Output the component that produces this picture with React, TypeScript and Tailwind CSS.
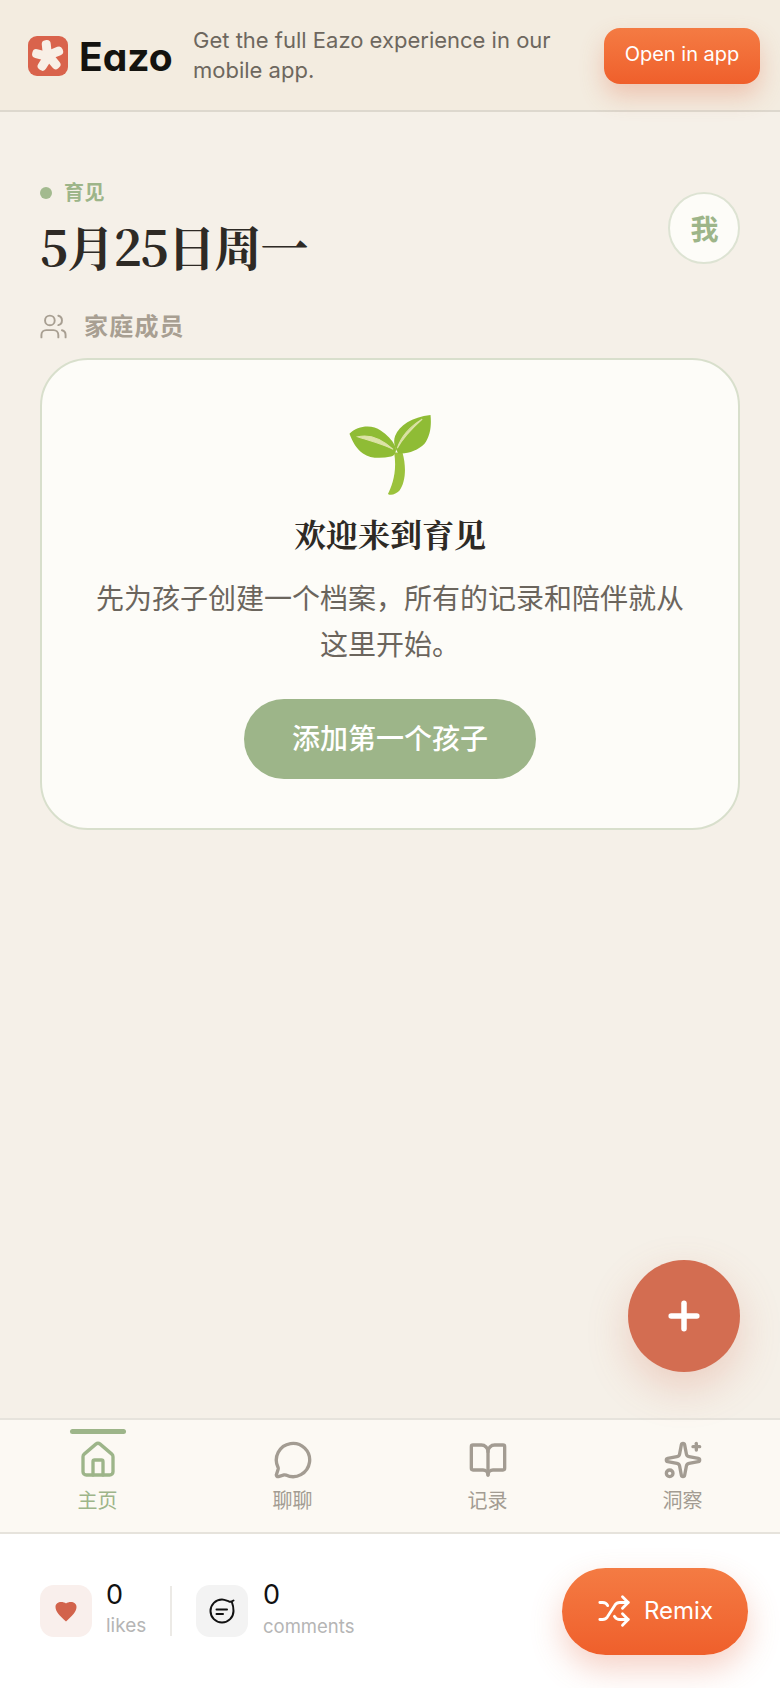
import React from "react";
import { BookOpen, Home, MessageCircle, Plus, Shuffle, Sparkles, Users } from "lucide-react";

const SANS = { fontFamily: '"Inter", "Noto Sans CJK SC", sans-serif' };
const SERIF = { fontFamily: '"Noto Serif CJK SC", "Liberation Serif", "Noto Sans CJK SC", serif' };

function EazoMark() {
  return (
    <svg width="40" height="40" viewBox="0 0 40 40" className="mt-[2px]">
      <rect width="40" height="40" rx="9" fill="#d9634c" />
      <g fill="#f8efe6">
        <rect x="15" y="4" width="9" height="15" rx="4" transform="rotate(-6 20 20)" />
        <rect x="15" y="4" width="9" height="15" rx="4" transform="rotate(68 20 20)" />
        <rect x="15" y="4" width="9" height="15" rx="4" transform="rotate(140 20 20)" />
        <rect x="15" y="4" width="9" height="15" rx="4" transform="rotate(212 20 20)" />
        <rect x="15" y="4" width="9" height="15" rx="4" transform="rotate(284 20 20)" />
        <circle cx="20" cy="20" r="6" />
      </g>
    </svg>
  );
}

function Sprout() {
  return (
    <svg width="82" height="80" viewBox="0 0 78 77">
      <path d="M43 36H51C55 50 54 65 48 73C45 76 40 78 37 76C41 68 46 55 43 36Z" fill="#9bc23c" />
      <path d="M0 18C8 10 22 9 30 15C36 19 41 24 44 30C46 34 44 39 40 40C30 42 20 42 13 37C7 33 3 26 0 18Z" fill="#8fbc35" />
      <path d="M78 0C79 10 78 20 72 28C66 34 56 38 47 37C43 31 42 25 44 20C48 10 60 2 78 0Z" fill="#8fbc35" />
      <path d="M8 21C20 18 32 24 42 33C32 28 20 25 8 21Z" fill="#dde3a8" stroke="#dde3a8" strokeWidth="1" />
      <path d="M70 4C60 10 50 20 46 32C52 21 60 13 70 4Z" fill="#dde3a8" stroke="#dde3a8" strokeWidth="1" />
    </svg>
  );
}

function CommentIcon() {
  return (
    <svg width="26" height="26" viewBox="0 0 26 26" fill="none" stroke="#111" strokeWidth="2" strokeLinecap="round">
      <path d="M23 4.500C24 7 24.500 10 24.500 13A11.500 11.500 0 1 1 13 1.500C15.500 1.500 18 2.800 20 3.500C21 3.800 22.500 3.800 24.500 2.500" />
      <path d="M7.500 11.500H18" />
      <path d="M7.500 16H14" />
    </svg>
  );
}

const tabs = [
  { label: "主页", icon: Home, active: true },
  { label: "聊聊", icon: MessageCircle, active: false },
  { label: "记录", icon: BookOpen, active: false },
  { label: "洞察", icon: Sparkles, active: false },
];

export default function App() {
  return (
    <div className="relative flex h-[1688px] w-[780px] flex-col overflow-hidden bg-[#f5f0e8]" style={SANS}>
      {/* Banner */}
      <header className="flex h-[112px] items-center border-b-2 border-[#ddd8ce] bg-[#f3ece0] pl-[28px] pr-[20px]">
        <EazoMark />
        <span className="ml-[11px] mt-[2px] w-[93px] text-[39px] font-bold leading-none text-[#14130f] [font-feature-settings:'cv11']">Eazo</span>
        <p className="ml-[21px] w-[385px] text-[22px] leading-[30px] text-[#6d675e]">
          Get the full Eazo experience in our mobile app.
        </p>
        <button className="ml-auto mt-[2px] h-[56px] w-[156px] rounded-[16px] bg-gradient-to-b from-[#f47b43] to-[#ef5f2b] pb-[4px] text-[20px] text-white shadow-[0_12px_24px_rgba(226,105,70,0.3)]">
          Open in app
        </button>
      </header>

      <main className="flex flex-1 flex-col px-[40px]">
        <div className="mt-[67px] flex items-start justify-between">
          <div>
            <div className="flex items-center gap-[12px]">
              <span className="h-[12px] w-[12px] rounded-full bg-[#a3ba8f]" />
              <span className="text-[20px] font-bold leading-[28px] tracking-[0.5px] text-[#9db589]">育见</span>
            </div>
            <h1 className="mt-[7px] text-[48px] font-bold leading-[64px] tracking-[-1.500px] text-[#2e2a25]" style={SERIF}>5月25日周一</h1>
          </div>
          <div className="mt-[13px] flex h-[72px] w-[72px] items-center justify-center rounded-full border-2 border-[#dde3d3] bg-[#fdfcf8] pl-[1px] pt-[3px] text-[28px] font-bold text-[#9db589]">我</div>
        </div>

        <div className="-ml-[1px] mt-[31px] flex items-center gap-[16px]">
          <Users size={29} strokeWidth={1.6} className="-mt-[2px] text-[#a89f92]" />
          <span className="text-[24px] font-bold leading-[36px] tracking-[1.200px] text-[#a89f92]">家庭成员</span>
        </div>

        <section className="mt-[13px] flex h-[472px] flex-col items-center rounded-[48px] border-2 border-[#d8dfcc] bg-[#fdfcf8] pt-[55px]">
          <Sprout />
          <h2 className="mt-[16px] text-[32px] font-bold leading-[44px] text-[#2e2a25]" style={SERIF}>欢迎来到育见</h2>
          <p className="mt-[21px] w-[600px] text-center text-[28px] leading-[46px] text-[#6b655d]">
            先为孩子创建一个档案，所有的记录和陪伴就从这里开始。
          </p>
          <button className="mt-[31px] h-[80px] w-[292px] rounded-full bg-[#9db589] text-[28px] font-medium text-white">
            添加第一个孩子
          </button>
        </section>
      </main>

      <button className="absolute left-[628px] top-[1260px] flex h-[112px] w-[112px] items-center justify-center rounded-full bg-[#d36d51] text-white shadow-[0_16px_40px_rgba(211,109,81,0.25)]">
        <Plus size={44} strokeWidth={3} />
      </button>

      {/* Tabs */}
      <nav className="grid h-[116px] grid-cols-4 border-y-2 border-[#e6e3dc] bg-[#fcf9f3]">
        {tabs.map((t) => {
          const Icon = t.icon;
          return (
            <div key={t.label} className={`relative flex flex-col items-center pt-[20px] ${t.active ? "text-[#9db589]" : "text-[#a39c92]"}`}>
              {t.active && <span className="absolute top-[9px] h-[5px] w-[56px] rounded-full bg-[#9db589]" />}
              <Icon size={40} strokeWidth={2} />
              <span className="mt-[7px] text-[20px] leading-[28px]">{t.label}</span>
            </div>
          );
        })}
      </nav>

      {/* Bottom bar */}
      <footer className="flex h-[154px] items-center bg-white pl-[40px] pr-[32px]">
        <div className="flex h-[52px] w-[52px] items-center justify-center rounded-[14px] bg-[#f9efec]">
          <svg width="24" height="24" viewBox="0 0 24 24" fill="#d2634c">
            <path d="M12 22.500C6 17 1.500 13 1.500 8C1.500 4.500 4.300 3 7 3C9 3 11 3.500 12 4.500C13 3.500 15 3 17 3C19.700 3 22.500 4.500 22.500 8C22.500 13 18 17 12 22.500Z" />
          </svg>
        </div>
        <div className="ml-[14px] -mt-[4px] flex w-[64px] flex-col">
          <span className="text-[27px] leading-[34px] text-[#111]">0</span>
          <span className="text-[19px] leading-[28px] text-[#b5b5b5]">likes</span>
        </div>
        <span className="h-[50px] w-[2px] bg-[#eceae6]" />
        <div className="ml-[24px] flex h-[52px] w-[52px] items-center justify-center rounded-[14px] bg-[#f3f3f3]">
          <CommentIcon />
        </div>
        <div className="ml-[15px] -mt-[4px] flex flex-col">
          <span className="text-[27px] leading-[34px] text-[#111]">0</span>
          <span className="text-[18.500px] leading-[28px] text-[#b5b5b5]">comments</span>
        </div>
        <button className="ml-auto flex h-[87px] w-[186px] items-center justify-center gap-[13px] rounded-full bg-gradient-to-b from-[#f47b43] to-[#ef5f2b] text-[24px] text-white shadow-[0_14px_32px_rgba(226,105,70,0.3)]">
          <Shuffle size={34} strokeWidth={2} />
          Remix
        </button>
      </footer>
    </div>
  );
}
